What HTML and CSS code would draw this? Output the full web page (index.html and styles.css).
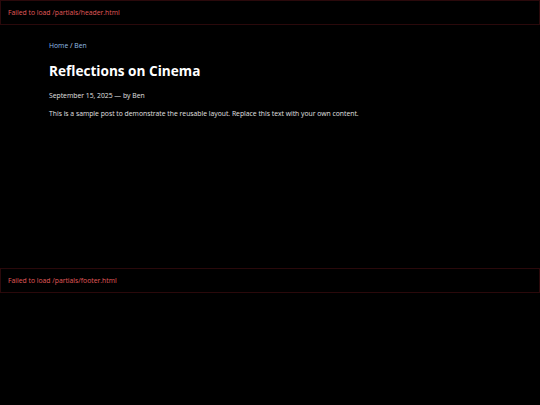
FILE: index.html
```html
<!DOCTYPE html>
<html lang="en">
<head>
<meta charset="utf-8">
<title>Reflections on Cinema</title>
<link rel="stylesheet" href="styles.css">
</head>
<body>
<header class="partial-error header-box">Failed to load /partials/header.html</header>
<main class="page">
  <nav class="crumbs"><a href="#">Home</a> <span class="sep">/</span> <a href="#">Ben</a></nav>
  <h1 class="title">Reflections on Cinema</h1>
  <p class="meta">September 15, 2025 — by Ben</p>
  <p class="body-text">This is a sample post to demonstrate the reusable layout. Replace this text with your own content.</p>
</main>
<footer class="partial-error footer-box">Failed to load /partials/footer.html</footer>
</body>
</html>
```
FILE: styles.css
```css
html, body {
  margin: 0;
  padding: 0;
  background: #000;
  color: #e8e8e8;
  font-family: "Open Sans", "Noto Sans", sans-serif;
}
body {
  min-height: 405px;
}
.partial-error {
  display: block;
  border: 1px solid #2a090b;
  color: #e05a5a;
  font-size: 6.8px;
  line-height: 10px;
  padding: 7px 7px 6px;
}
.page {
  padding: 16px 49px 0;
  height: 243px;
  box-sizing: border-box;
}
.crumbs {
  font-size: 6.8px;
  line-height: 10px;
}
.crumbs a {
  color: #90bde6;
  text-decoration: none;
}
.sep { color: #d0d8e0; }
.title {
  margin: 10px 0 0;
  font-size: 13.6px;
  line-height: 20px;
  font-weight: 700;
  color: #fff;
}
.meta {
  margin: 10px 0 0;
  font-size: 6.8px;
  line-height: 10px;
  color: #e0e0e0;
}
.body-text {
  margin: 8px 0 0;
  font-size: 6.8px;
  line-height: 10px;
  color: #e0e0e0;
}
```
